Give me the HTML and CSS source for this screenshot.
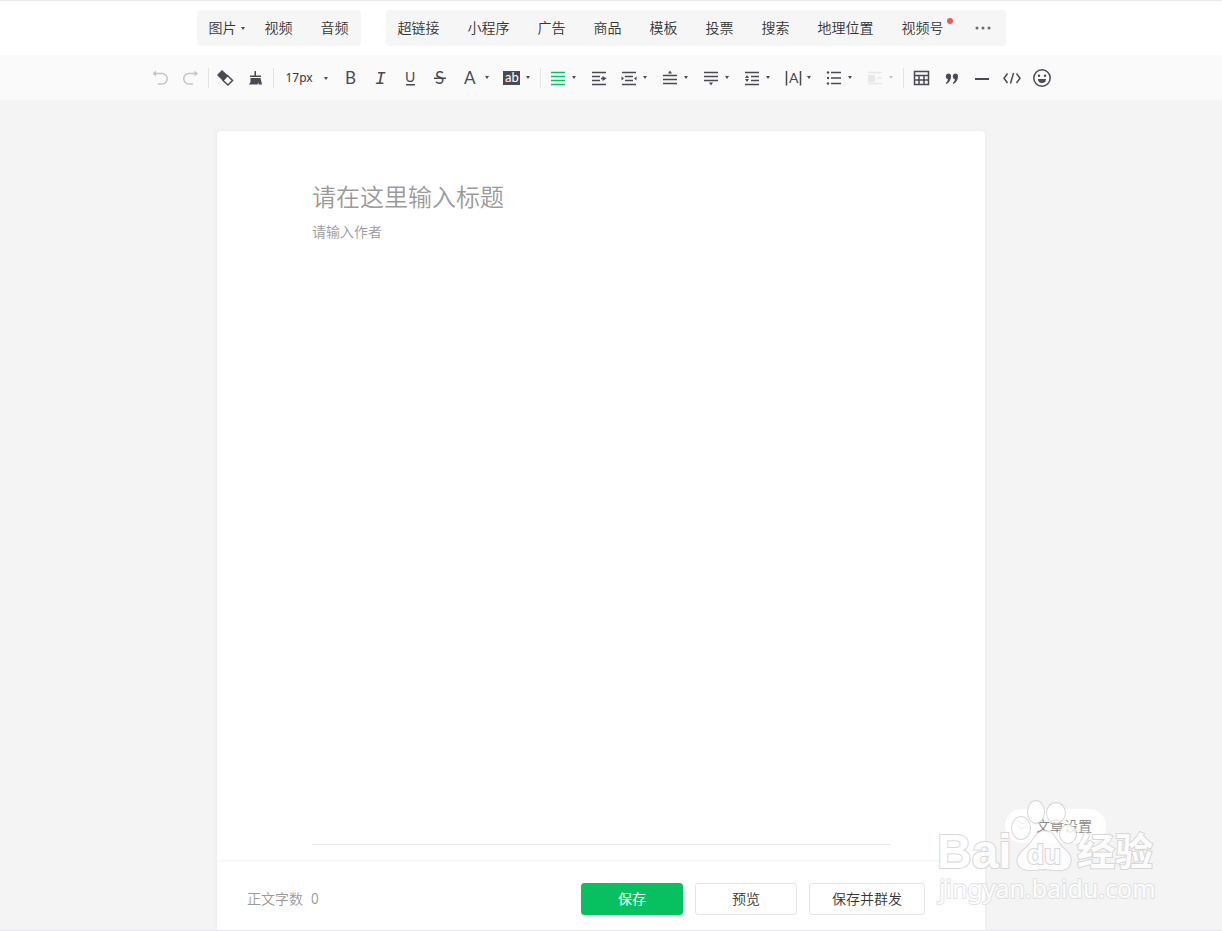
FILE: index.html
```html
<!DOCTYPE html>
<html lang="zh-CN">
<head>
    <meta charset="UTF-8">
    <meta name="viewport" content="width=device-width, initial-scale=1.0">
    <title>图文编辑</title>
    <link rel="stylesheet" href="styles.css">
</head>
<body>

    <header class="menu">
        <nav class="menu-group">
            <button class="menu-item has-arrow">图片</button>
            <button class="menu-item">视频</button>
            <button class="menu-item">音频</button>
        </nav>
        <nav class="menu-group">
            <button class="menu-item">超链接</button>
            <button class="menu-item">小程序</button>
            <button class="menu-item">广告</button>
            <button class="menu-item">商品</button>
            <button class="menu-item">模板</button>
            <button class="menu-item">投票</button>
            <button class="menu-item">搜索</button>
            <button class="menu-item">地理位置</button>
            <button class="menu-item has-dot">视频号</button>
            <button class="menu-item more" aria-label="更多">
                <svg width="22" height="20" viewBox="0 0 22 20"><circle cx="5" cy="11" r="1.5"/><circle cx="11" cy="11" r="1.5"/><circle cx="17" cy="11" r="1.5"/></svg>
            </button>
        </nav>
    </header>

    <div class="toolbar">
        <button class="tool disabled" aria-label="撤销">
            <svg viewBox="0 0 20 20"><path class="line" d="M3 5.5H11a5.200 5.200 0 0 1 0 10.500H7"/><path d="M1.500 5.500L5 2.500V8.500Z"/></svg>
        </button>
        <button class="tool disabled" aria-label="重做">
            <svg viewBox="0 0 20 20"><path class="line" d="M15 5.5H8a5.200 5.200 0 0 0 0 10.500H12"/><path d="M17 5.500L13.500 2.500V8.500Z"/></svg>
        </button>
        <span class="split"></span>
        <button class="tool" aria-label="清除格式">
            <svg viewBox="0 0 20 20"><path d="M1 7L6 2L12 7.5L7 13Z"/><path class="line" d="M7 12.500L11.500 7.500L16.500 12.500L12 17Z"/></svg>
        </button>
        <button class="tool" aria-label="格式刷">
            <svg viewBox="0 0 20 20"><path d="M8.500 3H10V7.500H15V9H4V7.500H8.500Z"/><path d="M4.500 10H14.500L16 16.500H12.500V14L11.500 16.500H3L4.500 14Z"/></svg>
        </button>
        <span class="split"></span>
        <span class="font-size">
            <select aria-label="字号"><option>17px</option></select>
        </span>
        <button class="tool" aria-label="加粗">
            <svg viewBox="0 0 20 20"><text class="letter" x="4" y="16">B</text></svg>
        </button>
        <button class="tool" aria-label="斜体">
            <svg viewBox="0 0 20 20"><text class="letter mono" x="4" y="16">I</text></svg>
        </button>
        <button class="tool" aria-label="下划线">
            <svg viewBox="0 0 20 20"><text class="letter small" x="4" y="14">U</text><path d="M5 16H14V17.5H5Z"/></svg>
        </button>
        <button class="tool" aria-label="删除线">
            <svg viewBox="0 0 20 20"><text class="letter" x="4" y="16">S</text><path d="M3 9.5H15V11H3Z"/></svg>
        </button>
        <button class="tool drop" aria-label="文字颜色">
            <svg viewBox="0 0 20 20"><text class="letter" x="3" y="16">A</text></svg>
        </button>
        <button class="tool drop" aria-label="背景颜色">
            <svg viewBox="0 0 20 20"><path d="M1 3H18V17H1Z"/><text class="letter light" x="3" y="14">ab</text></svg>
        </button>
        <span class="split"></span>
        <button class="tool drop green" aria-label="对齐">
            <svg viewBox="0 0 20 20"><path class="line" d="M3 4.500H17M3 8.500H17M3 12.500H17M3 16.500H17"/></svg>
        </button>
        <button class="tool" aria-label="首行缩进">
            <svg viewBox="0 0 20 20"><path class="line" d="M3 4.500H17M3 8.500H11M3 12.500H11M3 16.500H17M12 10.500H14"/><path d="M17.500 10.500L13.500 8V13Z"/></svg>
        </button>
        <button class="tool drop" aria-label="两端缩进">
            <svg viewBox="0 0 20 20"><path class="line" d="M3 4.500H17M6 8.500H14M6 12.500H14M3 16.500H17"/><path d="M2.500 8.500L5 10.500L2.500 12.500ZM17.500 8.500L15 10.500L17.500 12.500Z"/></svg>
        </button>
        <button class="tool drop" aria-label="段前距">
            <svg viewBox="0 0 20 20"><path class="line" d="M3 7.500H17M3 11.500H17M3 15.500H17"/><path d="M10 2.500L12 5.500H8Z"/></svg>
        </button>
        <button class="tool drop" aria-label="段后距">
            <svg viewBox="0 0 20 20"><path class="line" d="M3 4.500H17M3 8.500H17M3 12.500H17"/><path d="M10 17.500L12 14.500H8Z"/></svg>
        </button>
        <button class="tool drop" aria-label="行间距">
            <svg viewBox="0 0 20 20"><path class="line" d="M3 4.500H17M9 8.500H17M9 12.500H17M3 16.500H17"/><path d="M5 7L7 10H3ZM5 14L7 11H3Z"/></svg>
        </button>
        <button class="tool drop" aria-label="字间距">
            <svg viewBox="0 0 20 20"><path class="line" d="M3.500 3V17.500M17.500 3V17.500"/><text class="letter small" x="6" y="15">A</text></svg>
        </button>
        <button class="tool drop" aria-label="列表">
            <svg viewBox="0 0 20 20"><path class="line" d="M7 4.500H17M7 10H17M7 15.500H17"/><circle cx="4" cy="4.500" r="1.200"/><circle cx="4" cy="10" r="1.200"/><circle cx="4" cy="15.500" r="1.200"/></svg>
        </button>
        <button class="tool drop faint" aria-label="图文环绕">
            <svg viewBox="0 0 20 20"><path class="line" d="M3 4.500H17M12 10H17M3 15.500H17"/><path d="M3 7H10V14H3Z"/></svg>
        </button>
        <span class="split"></span>
        <button class="tool" aria-label="表格">
            <svg viewBox="0 0 20 20"><path class="line" d="M3.500 3.500H17.500V16.500H3.500ZM3.500 7.500H17.500M3.500 12H17.500M8 7.500V16.500M13 7.500V16.500"/></svg>
        </button>
        <button class="tool" aria-label="引用">
            <svg viewBox="0 0 20 20"><path d="M7 5.500a3 3 0 0 1 3 3.200c0 3.300-2 5.800-4.500 7.300l-.8-.9c1.200-1 2-2.200 2.200-3.800A3 3 0 0 1 7 5.500Z"/><path d="M14 5.500a3 3 0 0 1 3 3.200c0 3.300-2 5.800-4.500 7.300l-.8-.9c1.200-1 2-2.200 2.200-3.800A3 3 0 0 1 14 5.500Z"/></svg>
        </button>
        <button class="tool" aria-label="分隔线">
            <svg viewBox="0 0 20 20"><path d="M4 10H18V12H4Z"/></svg>
        </button>
        <button class="tool" aria-label="代码">
            <svg viewBox="0 0 20 20"><path class="line" d="M6.500 5.500L3 10.300L6.500 15M15.500 5.500L19 10.300L15.500 15M12.500 5L9.500 15.500"/></svg>
        </button>
        <button class="tool" aria-label="表情">
            <svg viewBox="0 0 20 20"><circle class="line" cx="11" cy="10" r="8.200"/><circle cx="8" cy="7.700" r="1.200"/><circle cx="14" cy="7.700" r="1.200"/><path d="M7 11H15a4 4 0 0 1-8 0Z"/></svg>
        </button>
    </div>

    <main class="page">
        <section class="paper">
            <input class="title-input" type="text" aria-label="标题" placeholder="请在这里输入标题">
            <input class="author-input" type="text" aria-label="作者" placeholder="请输入作者">
            <div class="content" contenteditable="true" aria-label="正文"></div>
        </section>

        <footer class="actions">
            <span class="count">正文字数<span class="number">0</span></span>
            <button class="btn btn-primary">保存</button>
            <button class="btn">预览</button>
            <button class="btn">保存并群发</button>
        </footer>
    </main>

    <button class="settings">
        <svg width="16" height="16" viewBox="0 0 16 16"><path d="M3 3L8 7L13 3M3 8L8 12L13 8"/></svg>
        文章设置
    </button>

    <svg class="watermark" width="240" height="120" viewBox="0 0 240 120">
        <ellipse cx="91" cy="33" rx="9" ry="11"/>
        <ellipse cx="106" cy="17" rx="8" ry="11"/>
        <ellipse cx="126" cy="18" rx="9" ry="10"/>
        <ellipse cx="138" cy="39" rx="8" ry="9"/>
        <path d="M115 36C106 36 104 46 97 52C90 58 86 63 88 69C91 77 103 75 114 74C126 75 137 78 140 69C143 61 137 57 131 51C125 44 124 36 115 36Z"/>
        <text class="mark-logo" x="7" y="73">Bai</text>
        <text class="mark-du" x="97" y="69">du</text>
        <text class="mark-cn" x="147" y="70">经验</text>
        <text class="mark-url" x="9" y="103">jingyan.baidu.com</text>
    </svg>

</body>
</html>
```

FILE: styles.css
```css
* {
    box-sizing: border-box;
}

body {
    display: flex;
    flex-direction: column;
    min-height: 100vh;
    margin: 0;
    position: relative;
    font-family: "Noto Sans CJK SC", sans-serif;
    font-size: 14px;
    font-weight: 350;
    color: #353535;
    background-color: #f4f4f4;
    border-top: 1px solid #ebebeb;
    border-bottom: 1px solid #e7e7eb;
}

button, input, select {
    font: inherit;
    color: inherit;
    padding: 0;
    border: none;
    background: none;
}

button {
    cursor: pointer;
}

/* top menu */
.menu {
    display: flex;
    justify-content: center;
    gap: 25px;
    padding: 9px 20px 9px 0;
    background-color: #fff;
}

.menu-group {
    display: flex;
    align-items: center;
    gap: 28px;
    height: 36px;
    padding: 0 12px 2px;
    background-color: #f6f6f6;
    border-radius: 3px;
}

.menu-item {
    position: relative;
    line-height: 20px;
    white-space: nowrap;
}

.has-arrow::after,
.drop::after,
.font-size::after {
    content: "";
    border: 2px solid transparent;
    border-top: 3px solid #4a4a52;
    border-bottom: none;
}

.has-arrow::after {
    position: absolute;
    right: -8px;
    top: 10px;
}

.has-dot::after {
    content: "";
    position: absolute;
    top: 1px;
    right: -9px;
    width: 6px;
    height: 6px;
    border-radius: 50%;
    background-color: #fa5151;
}

.more svg {
    display: block;
    fill: #6b6b6b;
}

/* toolbar */
.toolbar {
    display: flex;
    justify-content: center;
    align-items: center;
    height: 45px;
    padding-right: 21px;
    background-color: #fafafa;
    color: #4a4a52;
}

.tool {
    display: flex;
    align-items: center;
    margin: 0 5px;
}

.tool svg {
    width: 20px;
    height: 20px;
    fill: currentColor;
}

.tool .line {
    fill: none;
    stroke: currentColor;
    stroke-width: 1.5;
}

.drop {
    padding-right: 3px;
}

.drop::after {
    margin-left: 4px;
}

.disabled {
    color: #c4c4c6;
}

.green {
    color: #07c160;
}

.faint {
    color: #e8e8e8;
}

.faint::after {
    border-top-color: #c4c4c6;
}

.letter {
    font-family: Lato, sans-serif;
    font-size: 17px;
    font-weight: 400;
}

.letter.mono {
    font-family: "Liberation Mono", monospace;
    font-size: 18px;
    font-style: italic;
}

.letter.small {
    font-size: 14px;
}

.letter.light {
    font-size: 13px;
    fill: #fff;
}

.split {
    width: 1px;
    height: 20px;
    margin: 0 2px;
    background-color: #e4e4e6;
}

.font-size {
    position: relative;
    width: 50px;
    margin: 0 5px;
}

.font-size select {
    display: block;
    width: 100%;
    padding: 0 0 1px 5px;
    appearance: none;
    font-family: "Noto Sans", sans-serif;
    font-size: 12px;
    font-weight: 400;
    color: #353535;
}

.font-size::after {
    position: absolute;
    right: 3px;
    top: 8px;
    pointer-events: none;
}

/* editor */
.page {
    flex: 1;
    display: flex;
    flex-direction: column;
    align-items: center;
    padding: 31px 20px 0 0;
}

.paper {
    flex: 1;
    display: flex;
    flex-direction: column;
    width: 100%;
    max-width: 768px;
    padding: 46px 95px 17px;
    background-color: #fff;
    border-radius: 4px 4px 0 0;
    box-shadow: 0 0 4px rgba(0, 0, 0, 0.06);
}

.title-input {
    height: 36px;
    font-size: 24px;
}

.author-input {
    height: 36px;
}

.title-input::placeholder,
.author-input::placeholder {
    color: #9a9a9a;
}

.content {
    flex: 1;
    outline: none;
    border-bottom: 1px solid #e7e7eb;
}

.actions {
    display: flex;
    align-items: center;
    gap: 12px;
    width: 100%;
    max-width: 768px;
    height: 68px;
    padding: 5px 60px 0 30px;
    background-color: #fff;
    box-shadow: 0 -1px 4px rgba(0, 0, 0, 0.06);
}

.count {
    margin-right: auto;
    padding-bottom: 2px;
    color: #9a9a9a;
}

.number {
    margin-left: 8px;
}

.btn {
    min-width: 102px;
    height: 32px;
    padding: 0 22px 2px;
    border: 1px solid #e4e4e8;
    border-radius: 3px;
}

.btn-primary {
    color: #fff;
    font-weight: 400;
    background-color: #07c160;
    border-color: #07c160;
}

.settings {
    position: absolute;
    right: 116px;
    bottom: 87px;
    display: flex;
    align-items: center;
    gap: 6px;
    height: 34px;
    padding: 0 14px 2px 9px;
    border-radius: 17px;
    color: #888;
    background-color: #fff;
}

.settings path {
    fill: none;
    stroke: #aaa;
}

/* logo laid over the corner */
.watermark {
    position: absolute;
    right: 52px;
    bottom: 15px;
    pointer-events: none;
    fill: #fff;
    stroke: #cfcfcf;
    stroke-width: 2;
    paint-order: stroke;
    opacity: 0.8;
}

.mark-logo {
    font: bold 48px "Liberation Sans", sans-serif;
}

.mark-du {
    font: bold 28px "Liberation Sans", sans-serif;
}

.mark-cn {
    font: bold 38px "Noto Sans CJK SC", sans-serif;
}

.mark-url {
    font: 25px "Noto Sans", sans-serif;
    stroke: #dcdcdc;
}
```
